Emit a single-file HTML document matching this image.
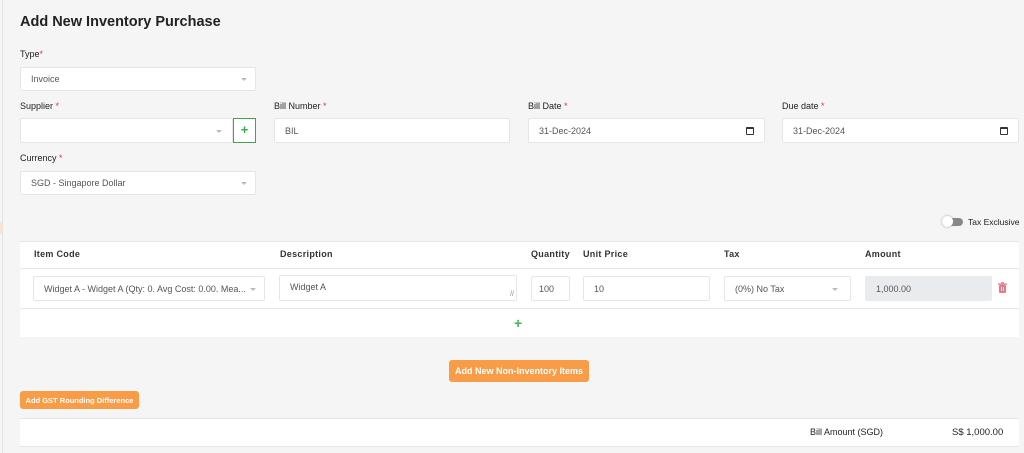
<!DOCTYPE html>
<html><head><meta charset="utf-8"><style>
*{box-sizing:border-box;margin:0;padding:0}
body{width:1024px;height:453px;overflow:hidden;background:#f5f5f5;font-family:"Liberation Sans",sans-serif;color:#333;position:relative}
.a{position:absolute}
.lbl{position:absolute;font-size:9px;color:#222}
.lbl b{color:#e0334f;font-weight:normal}
.box{position:absolute;background:#fff;border:1px solid #e6e6e6;border-radius:2px;font-size:9px;color:#555;padding-left:10px;display:flex;align-items:center}
.car{position:absolute;right:8px;top:50%;margin-top:-1px;border-left:3px solid transparent;border-right:3px solid transparent;border-top:3px solid #bbb}
.cal{position:absolute;right:10px;top:50%;margin-top:-4px;width:8px;height:8px;border:1.2px solid #333;border-top-width:2.5px;border-radius:1px}
.th{position:absolute;top:249px;font-size:9px;font-weight:bold;color:#333;letter-spacing:.3px}
.btn{position:absolute;background:#f89c47;color:#fff;border-radius:3px;font-weight:bold;display:flex;align-items:center;justify-content:center}
</style></head><body>
<div class="a" style="left:2px;top:0;width:1px;height:453px;background:#e4e4e4"></div>
<div class="a" style="left:0;top:222px;width:2px;height:12px;background:#fbe3cc"></div>
<div class="a" style="left:20px;top:14px;font-size:14.5px;font-weight:bold;color:#222">Add New Inventory Purchase</div>

<div class="lbl" style="left:20px;top:49px">Type<b>*</b></div>
<div class="box" style="left:20px;top:67px;width:236px;height:24px">Invoice<span class="car"></span></div>

<div class="lbl" style="left:20px;top:101px">Supplier <b>*</b></div>
<div class="box" style="left:20px;top:118px;width:213px;height:25px"><span class="car" style="right:10px"></span></div>
<div class="a" style="left:233px;top:118px;width:23px;height:25px;border:1px solid #3fa64a;background:#fff;color:#3fa64a;font-weight:bold;font-size:13px;text-align:center;line-height:22px">+</div>

<div class="lbl" style="left:274px;top:101px">Bill Number <b>*</b></div>
<div class="box" style="left:274px;top:118px;width:236px;height:25px">BIL</div>
<div class="lbl" style="left:528px;top:101px">Bill Date <b>*</b></div>
<div class="box" style="left:528px;top:118px;width:237px;height:25px">31-Dec-2024<span class="cal"></span></div>
<div class="lbl" style="left:782px;top:101px">Due date <b>*</b></div>
<div class="box" style="left:782px;top:118px;width:237px;height:25px">31-Dec-2024<span class="cal"></span></div>

<div class="lbl" style="left:20px;top:153px">Currency <b>*</b></div>
<div class="box" style="left:20px;top:171px;width:236px;height:24px">SGD - Singapore Dollar<span class="car"></span></div>

<div class="a" style="left:943px;top:218px;width:20px;height:8px;border-radius:4px;background:#888"></div>
<div class="a" style="left:942px;top:216px;width:11px;height:11px;border-radius:50%;background:#fff;box-shadow:0 0 2px #999"></div>
<div class="a" style="left:968px;top:217px;font-size:8.5px;color:#222">Tax Exclusive</div>

<div class="a" style="left:20px;top:241px;width:999px;height:96px;background:#fff;border-top:1px solid #e6e6e6"></div>
<div class="a" style="left:20px;top:268px;width:999px;height:1px;background:#e6e6e6"></div>
<div class="a" style="left:20px;top:308px;width:999px;height:1px;background:#e6e6e6"></div>
<div class="th" style="left:34px">Item Code</div>
<div class="th" style="left:280px">Description</div>
<div class="th" style="left:531px">Quantity</div>
<div class="th" style="left:583px">Unit Price</div>
<div class="th" style="left:724px">Tax</div>
<div class="th" style="left:865px">Amount</div>

<div class="box" style="left:33px;top:276px;width:232px;height:25px">Widget A - Widget A (Qty: 0. Avg Cost: 0.00. Mea...<span class="car"></span></div>
<div class="box" style="left:279px;top:275px;width:238px;height:26px;align-items:flex-start;padding-top:6px">Widget A<span class="a" style="right:2px;bottom:2px;font-size:7px;color:#888">//</span></div>
<div class="box" style="left:531px;top:276px;width:39px;height:25px;padding-left:7px">100</div>
<div class="box" style="left:583px;top:276px;width:127px;height:25px">10</div>
<div class="box" style="left:724px;top:276px;width:127px;height:25px">(0%) No Tax<span class="car" style="right:12px"></span></div>
<div class="box" style="left:865px;top:276px;width:127px;height:25px;background:#e9ecef;border-color:#e9ecef">1,000.00</div>
<svg class="a" style="left:997px;top:282px" width="11" height="12" viewBox="0 0 11 12"><rect x="2" y="3" width="7" height="8" rx="1" fill="#e87a87"/><rect x="1" y="1.5" width="9" height="1.3" fill="#e87a87"/><rect x="4" y="0.3" width="3" height="1.3" fill="#e87a87"/><path d="M4.5 5v4M6.5 5v4" stroke="#fff" stroke-width=".8"/></svg>
<div class="a" style="left:514px;top:315px;color:#3dbb4e;font-weight:bold;font-size:14px">+</div>

<div class="btn" style="left:449px;top:360px;width:140px;height:22px;font-size:9px">Add New Non-Inventory Items</div>
<div class="btn" style="left:20px;top:391px;width:119px;height:18px;font-size:7.5px">Add GST Rounding Difference</div>

<div class="a" style="left:20px;top:418px;width:999px;height:29px;background:#fff;border-top:1px solid #e6e6e6;border-bottom:1px solid #e6e6e6"></div>
<div class="a" style="left:810px;top:427px;font-size:9px;color:#222">Bill Amount (SGD)</div>
<div class="a" style="left:952px;top:427px;font-size:9.5px;color:#222">S$ 1,000.00</div>
</body></html>
